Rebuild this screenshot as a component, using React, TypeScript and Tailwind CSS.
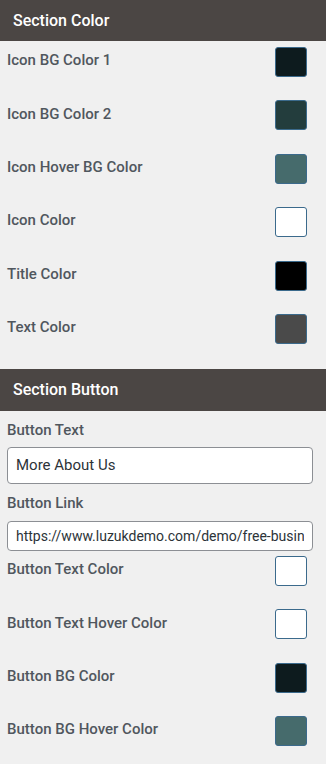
import type { ReactNode } from 'react';

type Swatch = { label: string; color: string };

const SECTION_COLORS: Swatch[] = [
  { label: 'Icon BG Color 1', color: '#0d1b1e' },
  { label: 'Icon BG Color 2', color: '#233d3d' },
  { label: 'Icon Hover BG Color', color: '#466b6c' },
  { label: 'Icon Color', color: '#ffffff' },
  { label: 'Title Color', color: '#000000' },
  { label: 'Text Color', color: '#4a4a4a' },
];

const BUTTON_COLORS: Swatch[] = [
  { label: 'Button Text Color', color: '#ffffff' },
  { label: 'Button Text Hover Color', color: '#ffffff' },
  { label: 'Button BG Color', color: '#0d1b1e' },
  { label: 'Button BG Hover Color', color: '#466b6c' },
];

function SectionHeader({ title, className = '' }: { title: string; className?: string }) {
  return (
    <div className={`flex items-center bg-[#4b4644] px-[13px] text-[16px] font-medium text-white ${className}`}>
      {title}
    </div>
  );
}

function ColorRow({ label, color }: Swatch) {
  return (
    <div className="flex h-[30px] items-center justify-between pl-[7px] pr-[19px]">
      <span className="mb-[3px] text-[15px] font-medium text-[#50575e]">{label}</span>
      <span
        className="h-[30px] w-[32px] rounded-[3px] border border-[#3b6a8c]"
        style={{ backgroundColor: color }}
      />
    </div>
  );
}

function FieldLabel({ children, className = '' }: { children: ReactNode; className?: string }) {
  return (
    <div className={`px-[7px] text-[15px] font-medium leading-[20px] text-[#50575e] ${className}`}>{children}</div>
  );
}

export default function App() {
  return (
    <div className="h-[764px] w-[326px] overflow-hidden bg-[#f0f0f0] font-['Roboto',sans-serif]">
      <SectionHeader title="Section Color" className="h-[41px]" />
      <div className="flex flex-col gap-[23.4px] pb-[25px] pt-[6px]">
        {SECTION_COLORS.map((s) => (
          <ColorRow key={s.label} {...s} />
        ))}
      </div>

      <SectionHeader title="Section Button" className="h-[42px]" />
      <div className="pt-[9px]">
        <FieldLabel>Button Text</FieldLabel>
        <div className="mt-[7px] px-[7px]">
          <input
            readOnly
            value="More About Us"
            className="h-[37px] w-[306px] rounded-[4px] border border-[#8c8f94] bg-white px-[8px] text-[15px] text-[#2c3338] outline-none"
          />
        </div>
        <FieldLabel className="mt-[9px]">Button Link</FieldLabel>
        <div className="mt-[8px] px-[7px]">
          <input
            readOnly
            value="https://www.luzukdemo.com/demo/free-business-theme/about-us/"
            className="h-[30px] w-[306px] rounded-[4px] border border-[#8c8f94] bg-white px-[8px] text-[14px] text-[#2c3338] outline-none"
          />
        </div>
        <div className="mt-[5px] flex flex-col gap-[23.4px]">
          {BUTTON_COLORS.map((s) => (
            <ColorRow key={s.label} {...s} />
          ))}
        </div>
      </div>
    </div>
  );
}
